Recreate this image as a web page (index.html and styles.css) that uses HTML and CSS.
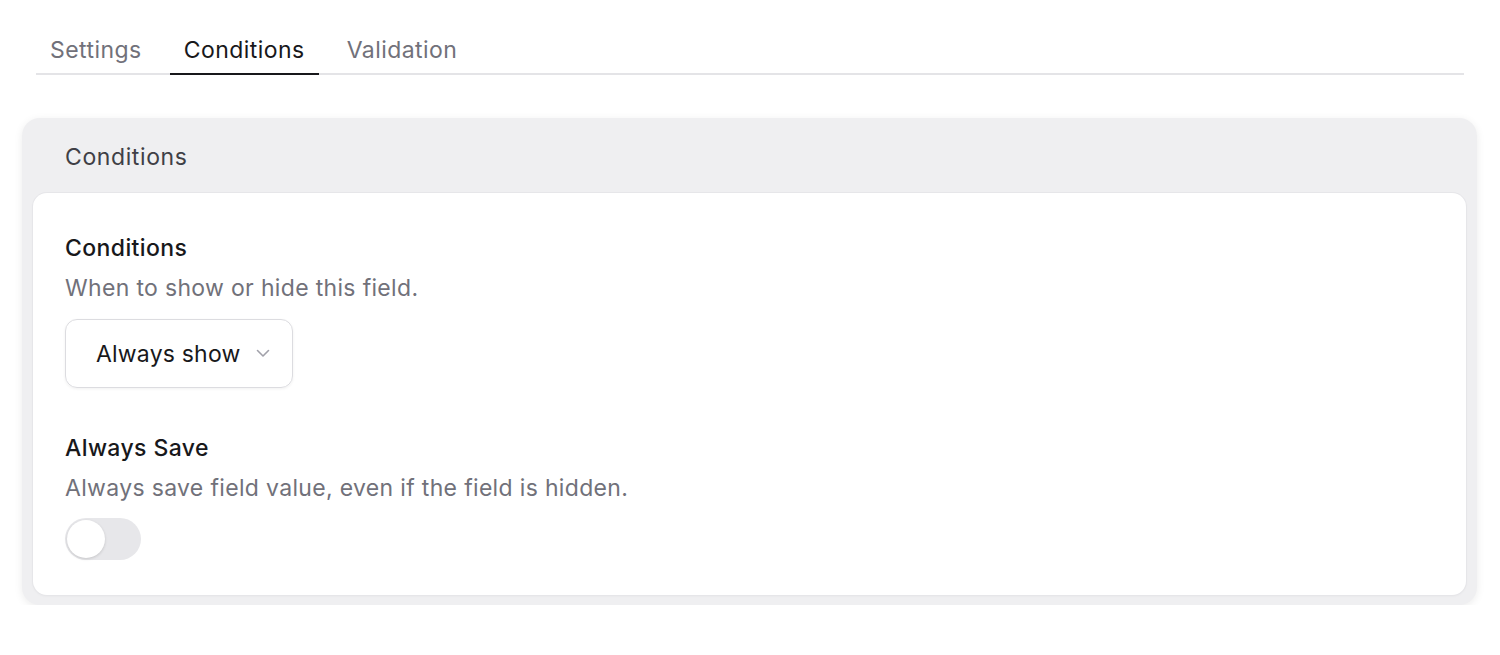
FILE: index.html
```html
<!DOCTYPE html>
<html lang="en">
<head>
<meta charset="utf-8">
<title>Conditions</title>
<link rel="stylesheet" href="styles.css">
</head>
<body>
<div class="page">
  <nav class="tabs">
    <div class="tab">Settings</div>
    <div class="tab active">Conditions</div>
    <div class="tab">Validation</div>
  </nav>
  <section class="panel">
    <div class="panel-head">Conditions</div>
    <div class="panel-body">
      <div class="field">
        <div class="label">Conditions</div>
        <div class="desc">When to show or hide this field.</div>
        <div class="select">
          <span>Always show</span>
          <svg class="chev" width="14" height="9" viewBox="0 0 14 9"><path d="M1.5 1.5 L7 7 L12.5 1.5" fill="none" stroke="#a1a1aa" stroke-width="1.6" stroke-linecap="round" stroke-linejoin="round"/></svg>
        </div>
      </div>
      <div class="field">
        <div class="label">Always Save</div>
        <div class="desc">Always save field value, even if the field is hidden.</div>
        <div class="toggle"><div class="knob"></div></div>
      </div>
    </div>
  </section>
</div>
</body>
</html>
```
FILE: styles.css
```css
* { box-sizing: border-box; }
body {
  margin: 0;
  background: #ffffff;
  font-family: Inter, "Noto Sans", "Liberation Sans", sans-serif;
  color: #18181b;
}
.page {
  padding: 26px 0 0 0;
}
.tabs {
  display: flex;
  gap: 14px;
  margin: 0 36px;
  border-bottom: 2px solid #e4e4e7;
  height: 49px;
}
.tab {
  padding: 0 14px;
  font-size: 23px;
  line-height: 48px;
  color: #71717a;
  letter-spacing: 0.45px;
}
.tab.active {
  color: #18181b;
  border-bottom: 2px solid #18181b;
  margin-bottom: -2px;
  height: 49px;
}
.panel {
  margin: 43px 23px 0 22px;
  background: #efeff1;
  border-radius: 18px;
  padding: 0 11px 10px 11px;
  box-shadow: 0 2px 8px rgba(0,0,0,0.08);
  height: 487px;
}
.panel-head {
  height: 75px;
  display: flex;
  align-items: center;
  padding-left: 32px;
  font-size: 23px;
  letter-spacing: 0.6px;
  color: #3f3f46;
  padding-top: 2px;
}
.panel-body {
  background: #ffffff;
  border-radius: 14px;
  box-shadow: 0 0 0 1px #e6e6e9, 0 1px 3px rgba(0,0,0,0.05);
  padding: 40px 32px 34px 32px;
  height: 402px;
}
.field + .field { margin-top: 45px; }
.label {
  font-size: 23px;
  font-weight: 500;
  line-height: 30px;
  letter-spacing: 0.4px;
  color: #18181b;
}
.desc {
  font-size: 23px;
  line-height: 30px;
  margin-top: 10px;
  letter-spacing: 0.33px;
  color: #71717a;
}
.select {
  margin-top: 16px;
  display: inline-flex;
  align-items: center;
  width: 228px;
  height: 69px;
  padding: 0 22px 0 30px;
  border: 1px solid #dcdce0;
  border-radius: 12px;
  box-shadow: 0 1px 3px rgba(0,0,0,0.06);
  font-size: 23px;
  letter-spacing: 0.2px;
  color: #18181b;
  justify-content: space-between;
}
.toggle {
  margin-top: 15px;
  width: 76px;
  height: 42px;
  border-radius: 21px;
  background: #e7e7ea;
  padding: 2px;
}
.knob {
  width: 38px;
  height: 38px;
  border-radius: 50%;
  background: #ffffff;
  box-shadow: 0 1px 3px rgba(0,0,0,0.15);
}
```
